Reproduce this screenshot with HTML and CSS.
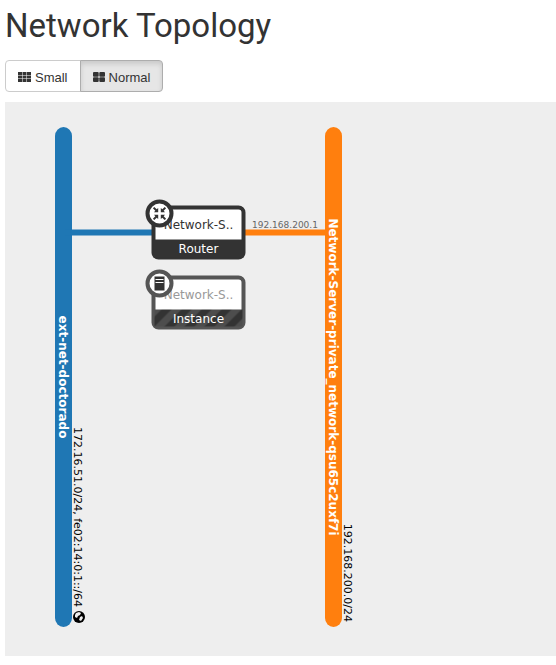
FILE: index.html
```html
<!DOCTYPE html>
<html lang="en">
<head>
<meta charset="utf-8">
<title>Network Topology</title>
<link rel="stylesheet" href="styles.css">
</head>
<body>
<header class="page-header"><h1>Network Topology</h1></header>
<main>
<div class="btn-group" role="group" aria-label="Display size">
  <button type="button" class="btn"><svg class="icon" width="13" height="10" viewBox="0 0 13 10" aria-hidden="true"><path d="M0 0h4v3H0zM4.500 0h4v3h-4zM9 0h4v3H9zM0 3.500h4v3H0zM4.500 3.500h4v3h-4zM9 3.500h4v3H9zM0 7h4v3H0zM4.500 7h4v3h-4zM9 7h4v3H9z"/></svg>Small</button>
  <button type="button" class="btn active" aria-pressed="true"><svg class="icon" width="12" height="10" viewBox="0 0 12 10" aria-hidden="true"><rect width="5.700" height="4.700" rx="1"/><rect x="6.300" width="5.700" height="4.700" rx="1"/><rect y="5.300" width="5.700" height="4.700" rx="1"/><rect x="6.300" y="5.300" width="5.700" height="4.700" rx="1"/></svg>Normal</button>
</div>
<svg class="topology" role="img" aria-label="Network diagram">
  <defs>
    <pattern id="stripes" width="20" height="20" patternUnits="userSpaceOnUse">
      <rect width="20" height="20" class="stripe-dark"/>
      <path class="stripe-light" d="M10 0H20L0 20V10zM20 10V20H10z"/>
    </pattern>
  </defs>
  <g class="public">
    <rect x="50" y="25" width="17" height="500" rx="9"/>
    <rect x="60" y="127.500" width="90" height="6"/>
    <text class="network-name" transform="translate(54 275) rotate(90)">ext-net-doctorado</text>
    <text class="cidr" transform="translate(69 505) rotate(90)">172.16.51.0/24, fe02:14:0:1::/64</text>
    <g transform="translate(74 515)"><circle class="globe" r="6"/><path class="land" d="M-3-4L0-5 2-4 1-2-1-1-2 1-4 0-4-2zM1 0L3-1 4 1 2 4 0 3z"/></g>
  </g>
  <g class="private">
    <rect x="320" y="25" width="17" height="500" rx="9"/>
    <rect x="235" y="127.500" width="90" height="6"/>
    <text class="network-name" transform="translate(324 275) rotate(90)">Network-Server-private_network-qsu65c2uxf7i</text>
    <text class="cidr" transform="translate(339 520) rotate(90)">192.168.200.0/24</text>
    <text class="address" x="280" y="126">192.168.200.1</text>
  </g>
  <g class="device router" transform="translate(148.500 105.500)">
    <rect class="frame" width="90" height="50" rx="5"/>
    <path class="base" d="M0 32H90V50H0z"/>
    <text class="device-name" x="45" y="21">Network-S..</text>
    <text class="device-type" x="45" y="45">Router</text>
    <g transform="translate(6 6)">
      <circle class="badge" r="12"/>
      <g class="glyph"><path id="arrow" d="M-1.300-1.300V-5.500L-2.800-4.200-5.200-6.600-6.600-5.200-4.200-2.800-5.500-1.300z"/><use href="#arrow" transform="rotate(90)"/><use href="#arrow" transform="rotate(180)"/><use href="#arrow" transform="rotate(270)"/></g>
    </g>
  </g>
  <g class="device instance" transform="translate(148.500 175.500)">
    <rect class="frame" width="90" height="50" rx="5"/>
    <path class="base" d="M1 32H89V49H1z"/>
    <text class="device-name" x="45" y="21">Network-S..</text>
    <text class="device-type" x="45" y="45">Instance</text>
    <g transform="translate(6 6)">
      <circle class="badge" r="12"/>
      <path class="glyph" d="M-5-7H5V7H-5z"/><path class="slots" d="M-4-4H4M-4-1H4"/>
    </g>
  </g>
</svg>
</main>
</body>
</html>
```
FILE: styles.css
```css
body {
  margin: 0 0 0 5px;
  background: #fff;
  color: #333;
  font-family: "Liberation Sans", Arial, sans-serif;
  font-size: 13px;
}
.page-header { padding: 6px 0 14px; }
h1 {
  margin: 0;
  font-family: Roboto, sans-serif;
  font-size: 33px;
  font-weight: 400;
  line-height: 40px;
}
.btn-group { display: flex; margin-bottom: 10px; }
.btn {
  display: flex;
  align-items: center;
  gap: 4px;
  height: 32px;
  padding: 2px 12px 0;
  border: 1px solid #ccc;
  border-radius: 4px 0 0 4px;
  background: #fff;
  color: #333;
  font: inherit;
}
.btn + .btn { margin-left: -1px; border-radius: 0 4px 4px 0; }
.btn.active {
  border-color: #adadad;
  background: #e6e6e6;
  box-shadow: inset 0 3px 5px rgba(0, 0, 0, .125);
}
.icon { fill: #333; }
.topology {
  display: block;
  width: 100%;
  height: 554px;
  background: #eee;
  font-family: "DejaVu Sans", sans-serif;
  font-size: 12px;
}
.public { fill: #1f77b4; }
.private { fill: #ff7f0e; }
.network-name { fill: #fff; font-weight: 700; text-anchor: middle; }
.cidr { fill: #000; font-size: 11px; text-anchor: end; }
.address { fill: #666; font-size: 9px; text-anchor: middle; }
.globe { fill: #000; }
.land { fill: #eee; }
.frame { fill: #fff; stroke: #333; stroke-width: 4px; }
.base { fill: #333; }
.device-name { fill: #333; text-anchor: middle; }
.device-type { fill: #fff; text-anchor: middle; }
.badge { fill: #fff; stroke: #333; stroke-width: 4px; }
.glyph { fill: #333; }
.slots { stroke: #fff; }
.instance .frame, .instance .badge { stroke: #555; }
.instance .base { fill: url(#stripes); }
.instance .device-name { fill: #999; }
.stripe-dark { fill: #333; }
.stripe-light { fill: #4d4d4d; }
```
